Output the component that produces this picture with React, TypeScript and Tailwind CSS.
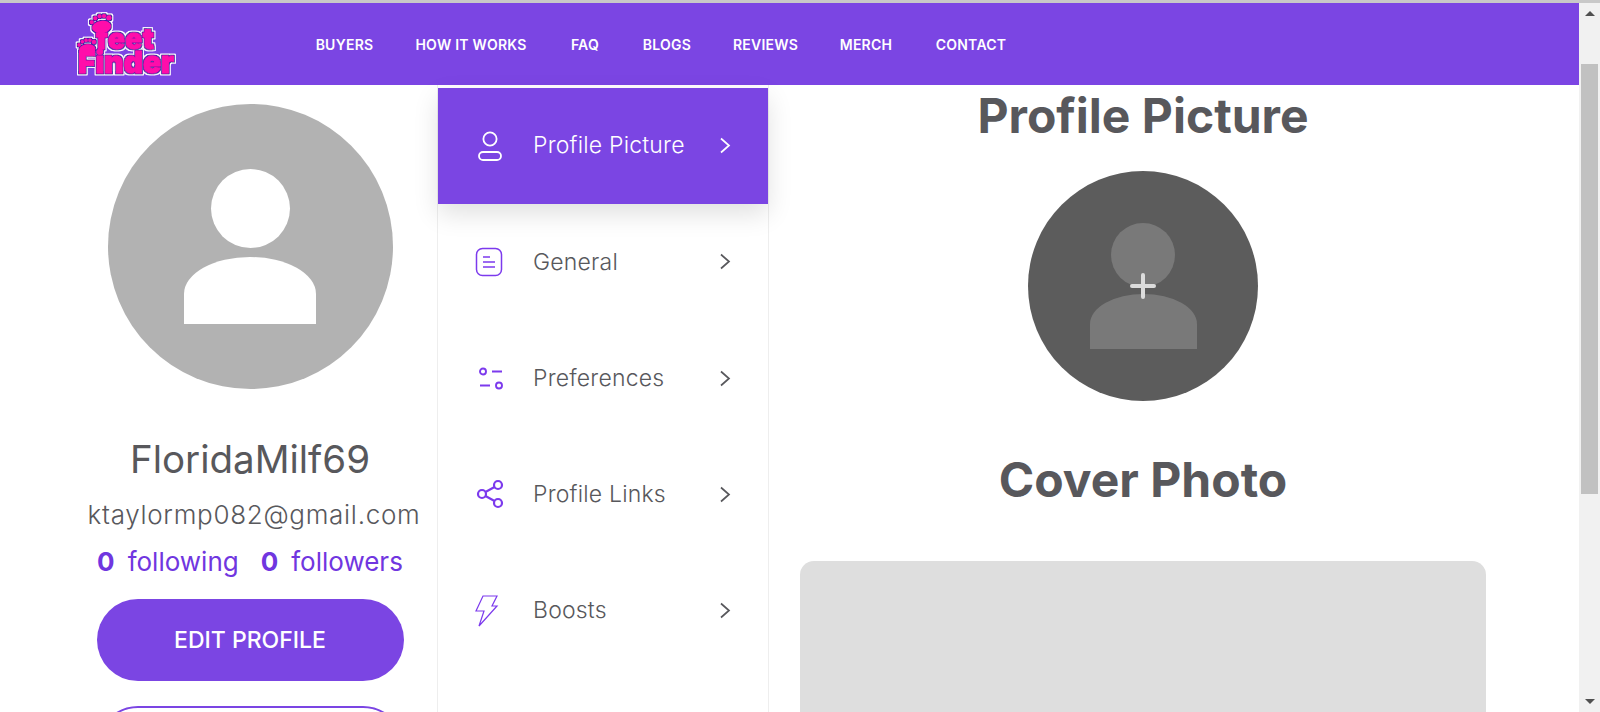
import React from "react";

const font = { fontFamily: '"Inter", "Liberation Sans", sans-serif' };

function Chevron({ className }: { className: string }) {
  return (
    <svg viewBox="0 0 12 17" className={className} fill="none" stroke="currentColor" strokeWidth="1.7">
      <path d="M2 1.5 10 8.5l-8 7" />
    </svg>
  );
}

function UserIcon() {
  return (
    <svg viewBox="0 0 26 30" className="w-[26px] h-[30px] ml-[2px]" fill="none" stroke="#fff" strokeWidth="1.8">
      <circle cx="13" cy="8" r="6.6" />
      <rect x="2" y="21" width="22" height="8" rx="4" />
    </svg>
  );
}
function GeneralIcon() {
  return (
    <svg viewBox="0 0 28 30" className="w-[28px] h-[30px]" fill="none" stroke="#7c3aed" strokeWidth="1.5">
      <rect x="1.5" y="1.5" width="25" height="27" rx="6" />
      <path d="M8 10h7M8 15h12M8 20h12" />
    </svg>
  );
}
function PrefIcon() {
  return (
    <svg viewBox="0 0 26 24" className="w-[26px] h-[25px] ml-[3px]" fill="none" stroke="#7c3aed" strokeWidth="1.9">
      <circle cx="5" cy="5" r="3" />
      <path d="M14 5h10M2 19h10" />
      <circle cx="21" cy="19" r="3" />
    </svg>
  );
}
function ShareIcon() {
  return (
    <svg viewBox="0 0 28 30" className="w-[28px] h-[30px] ml-[1px]" fill="none" stroke="#7c3aed" strokeWidth="2.2">
      <circle cx="22" cy="6" r="4" />
      <circle cx="6" cy="15" r="4" />
      <circle cx="22" cy="24" r="4" />
      <path d="M9.5 13 18.5 8M9.5 17l9 5" />
    </svg>
  );
}
function BoltIcon() {
  return (
    <svg viewBox="0 0 24 32" className="w-[24px] h-[32px]" fill="none" stroke="#7c3aed" strokeWidth="1.2">
      <path d="M8 1h14l-5 10h5L4 31l5-15H1z" />
    </svg>
  );
}

function Foot({ x, y, r, s = 1 }: { x: number; y: number; r: number; s?: number }) {
  return (
    <g transform={`translate(${x} ${y}) rotate(${r}) scale(${s})`} fill="#ff0aaa">
      <circle cx="-9" cy="-2" r="2" />
      <circle cx="-5" cy="-5.5" r="2" />
      <circle cx="-0.5" cy="-6.8" r="2" />
      <circle cx="4" cy="-6.5" r="2" />
      <circle cx="8.5" cy="-4" r="2.5" />
      <ellipse cx="0" cy="4" rx="9.5" ry="6" />
    </g>
  );
}

function Logo() {
  const t: React.CSSProperties = {
    fontFamily: '"Inter", "Liberation Sans", sans-serif',
    fontWeight: 900,
    strokeLinejoin: "round",
  };
  return (
    <svg viewBox="72 6 110 76" className="w-[110px] h-[76px] shrink-0">
      <defs>
        <filter id="logoEdge" x="-15%" y="-15%" width="130%" height="130%">
          <feMorphology in="SourceAlpha" operator="dilate" radius="2" result="a" />
          <feGaussianBlur in="a" stdDeviation="0.6" result="a2" />
          <feFlood floodColor="#ffffff" />
          <feComposite in2="a2" operator="in" result="white" />
          <feMorphology in="SourceAlpha" operator="dilate" radius="1" result="b" />
          <feGaussianBlur in="b" stdDeviation="0.4" result="b2" />
          <feFlood floodColor="#4a12a8" />
          <feComposite in2="b2" operator="in" result="purple" />
          <feMerge result="m">
            <feMergeNode in="white" />
            <feMergeNode in="purple" />
            <feMergeNode in="SourceGraphic" />
          </feMerge>
          <feGaussianBlur in="m" stdDeviation="0.25" />
        </filter>
      </defs>
      <g filter="url(#logoEdge)">
        <Foot x={101} y={23} r={-8} />
        <Foot x={87} y={46} r={-5} s={0.85} />
        <text x="96" y="49" fontSize="28" fill="#ff0aaa" stroke="#ff0aaa" strokeWidth="0.8" style={t} textLength="58" lengthAdjust="spacing">
          feet
        </text>
        <text x="78" y="73" fontSize="30" fill="#ff0aaa" stroke="#ff0aaa" strokeWidth="0.8" style={t} textLength="96" lengthAdjust="spacingAndGlyphs">
          Finder
        </text>
      </g>
    </svg>
  );
}

const navLinks = [
  { label: "BUYERS", w: "w-[55px]" },
  { label: "HOW IT WORKS", w: "w-[112px]" },
  { label: "FAQ", w: "w-[30px]" },
  { label: "BLOGS", w: "w-[48px]" },
  { label: "REVIEWS", w: "w-[63px]" },
  { label: "MERCH", w: "w-[52px]" },
  { label: "CONTACT", w: "w-[72px]" },
];

const menu = [
  { label: "Profile Picture", icon: <UserIcon />, active: true },
  { label: "General", icon: <GeneralIcon /> },
  { label: "Preferences", icon: <PrefIcon /> },
  { label: "Profile Links", icon: <ShareIcon /> },
  { label: "Boosts", icon: <BoltIcon /> },
];

function Scrollbar() {
  return (
    <div className="w-[21px] shrink-0 h-full bg-[#f1f1f1] flex flex-col items-center">
      <div className="h-[21px] w-full flex items-center justify-center">
        <div className="w-0 h-0 border-l-[5px] border-r-[5px] border-b-[5px] border-l-transparent border-r-transparent border-b-[#505050]" />
      </div>
      <div className="mt-[40px] w-[17px] h-[430px] bg-[#c1c1c1]" />
      <div className="flex-1" />
      <div className="h-[21px] w-full flex items-center justify-center">
        <div className="w-0 h-0 border-l-[5px] border-r-[5px] border-t-[5px] border-l-transparent border-r-transparent border-t-[#505050]" />
      </div>
    </div>
  );
}

export default function App() {
  return (
    <div className="w-[1600px] h-[712px] overflow-hidden flex flex-col bg-white" style={font}>
      <div className="h-[3px] bg-[#c8c8c8] shrink-0" />
      <div className="flex-1 min-h-0 flex">
        <div className="w-[1579px] h-full flex flex-col overflow-hidden">
          <header className="h-[82px] shrink-0 bg-[#7b45e3] flex items-center pl-[72px]">
            <Logo />
            <nav className="ml-[135px] flex gap-[43px] text-white text-[14px] font-semibold tracking-[0.25px] whitespace-nowrap">
              {navLinks.map((n) => (
                <span key={n.label} className={`${n.w} flex justify-center`}>{n.label}</span>
              ))}
            </nav>
          </header>
          <main className="flex-1 flex min-h-0">
            <aside className="w-[437px] shrink-0 flex flex-col items-center pt-[19px] pl-[63px]">
              <div className="w-[285px] h-[285px] rounded-full bg-[#b2b2b2] shrink-0 flex flex-col items-center pt-[65px]">
                <div className="w-[79px] h-[79px] rounded-full bg-white" />
                <div className="mt-[9px] w-[132px] h-[67px] rounded-t-[66px_37px] bg-white" />
              </div>
              <h2 className="mt-[48px] text-[38.5px] leading-[44px] text-[#58585c] font-normal whitespace-nowrap">FloridaMilf69</h2>
              <div className="mt-[18px] ml-[8px] text-[26px] leading-[32px] text-[#58585c] font-light tracking-[0.7px] whitespace-nowrap">ktaylormp082@gmail.com</div>
              <div className="mt-[15px] flex gap-[22px] text-[26px] leading-[32px] text-[#7036e0] whitespace-nowrap">
                <span><b className="font-bold mr-[13px]">0</b>following</span>
                <span><b className="font-bold mr-[13px]">0</b>followers</span>
              </div>
              <button className="mt-[21px] shrink-0 w-[307px] h-[82px] rounded-full bg-[#7b45e3] text-white text-[23px] font-medium">EDIT PROFILE</button>
              <div className="mt-[25px] shrink-0 w-[307px] h-[82px] rounded-full border-2 border-[#7b45e3]" />
            </aside>
            <section className="w-[332px] shrink-0 border-x border-[#eeeeee] pt-[2.5px] flex flex-col">
              {menu.map((m) => (
                <div
                  key={m.label}
                  className={
                    m.active
                      ? "h-[116.25px] shrink-0 flex items-center bg-[#7b45e3] text-white shadow-[0_10px_24px_rgba(0,0,0,0.12)]"
                      : "h-[116.25px] shrink-0 flex items-center text-[#58585c]"
                  }
                >
                  <div className="w-[95px] pl-[37px] flex items-center">{m.icon}</div>
                  <span className="flex-1 text-[23px] font-light tracking-[0.2px] whitespace-nowrap">{m.label}</span>
                  <Chevron className="w-[12px] h-[17px] mr-[37px]" />
                </div>
              ))}
            </section>
            <section className="flex-1 min-w-0 flex flex-col items-start pl-[31px]">
              <div className="w-[686px] flex flex-col items-center">
                <h1 className="mt-[3px] text-[48px] leading-[56px] font-bold text-[#58585c] whitespace-nowrap">Profile Picture</h1>
                <div className="mt-[27px] w-[230px] h-[230px] rounded-full bg-[#5c5c5c] shrink-0 relative flex flex-col items-center pt-[52px]">
                  <div className="w-[64px] h-[64px] rounded-full bg-[#797979]" />
                  <div className="mt-[7px] w-[107px] h-[55px] rounded-t-[53.5px_30px] bg-[#797979]" />
                  <div className="absolute left-[102px] top-[113px] w-[26px] h-[4px] rounded bg-[#dcdcdc]" />
                  <div className="absolute left-[113px] top-[102px] w-[4px] h-[26px] rounded bg-[#dcdcdc]" />
                </div>
                <h1 className="mt-[51px] text-[48px] leading-[56px] font-bold text-[#58585c] whitespace-nowrap">Cover Photo</h1>
                <div className="mt-[53px] w-[686px] h-[200px] shrink-0 rounded-[14px] bg-[#dedede]" />
              </div>
            </section>
          </main>
        </div>
        <Scrollbar />
      </div>
    </div>
  );
}
